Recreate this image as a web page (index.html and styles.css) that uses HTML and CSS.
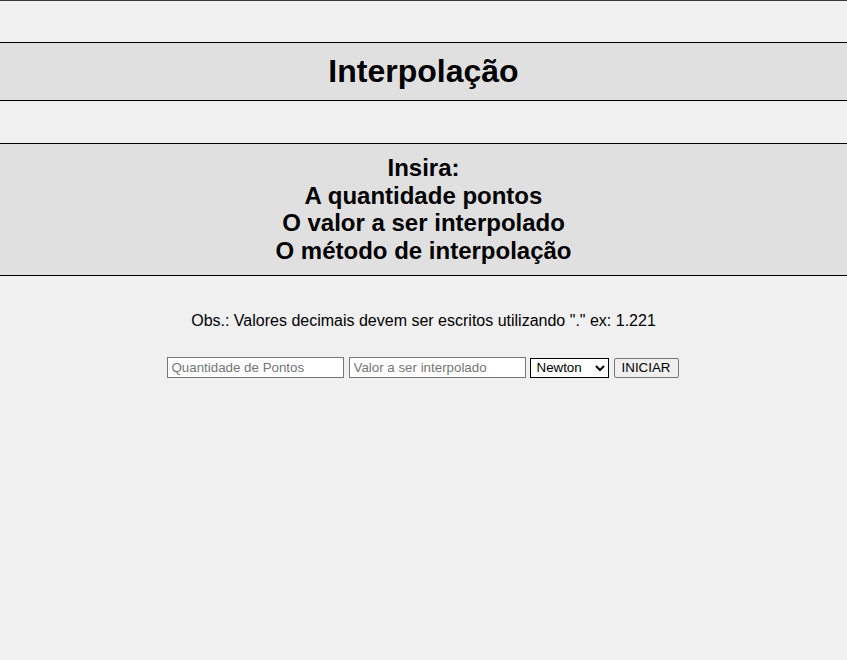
FILE: index.html
```html
<!DOCTYPE html>
<html lang="pt">
<head>
<meta charset="utf-8">
<title>Interpolação</title>
<link rel="stylesheet" href="styles.css">
</head>
<body>
<div class="top-gap"></div>
<div class="band title-band">
  <h1 class="title">Interpolação</h1>
</div>
<div class="mid-gap"></div>
<div class="band info-band">
  <h2 class="info">Insira:<br>A quantidade pontos<br>O valor a ser interpolado<br>O método de interpolação</h2>
</div>
<p class="obs">Obs.: Valores decimais devem ser escritos utilizando "." ex: 1.221</p>
<div class="controls">
  <input class="field" type="text" placeholder="Quantidade de Pontos">
  <input class="field" type="text" placeholder="Valor a ser interpolado">
  <select class="method">
    <option>Newton</option>
    <option>Lagrange</option>
  </select>
  <button class="start" type="button">INICIAR</button>
</div>
</body>
</html>
```
FILE: styles.css
```css
html, body {
  margin: 0;
  padding: 0;
  background: #f0f0f0;
  font-family: "Liberation Sans", Arial, sans-serif;
  color: #000;
}
.top-gap {
  height: 41px;
  border-top: 1px solid #3a3a3a;
}
.mid-gap {
  height: 42px;
}
.band {
  background: #e0e0e0;
  border-top: 1px solid #000;
  border-bottom: 1px solid #000;
  text-align: center;
}
.title-band {
  padding: 10px 0;
  height: 37px;
}
.title {
  margin: 0;
  font-size: 32px;
  line-height: 37px;
  font-weight: bold;
}
.info-band {
  padding: 10px 0;
  height: 111px;
}
.info {
  margin: 0;
  font-size: 24px;
  line-height: 27.7px;
  font-weight: bold;
}
.obs {
  margin: 36px 0 0;
  text-align: center;
  font-size: 16px;
  line-height: 18px;
}
.controls {
  display: flex;
  justify-content: center;
  align-items: center;
  gap: 5px;
  margin-top: 27px;
  padding-right: 2px;
}
.field {
  box-sizing: border-box;
  width: 177px;
  height: 21px;
  margin: 0;
  padding: 1px 4px;
  border: 1px solid #767676;
  border-radius: 0;
  background: #fff;
  font-family: "Liberation Sans", Arial, sans-serif;
  font-size: 13.33px;
}
.field::placeholder {
  color: #757575;
}
.method {
  box-sizing: border-box;
  width: 79px;
  height: 20px;
  margin: 0 0 0 -1px;
  padding: 0 0 0 2px;
  border: 1px solid #000;
  border-radius: 0;
  background: #fff;
  font-family: "Liberation Sans", Arial, sans-serif;
  font-size: 13.33px;
  color: #000;
}
.start {
  box-sizing: border-box;
  width: 65px;
  height: 20px;
  margin: 0;
  padding: 1px 0;
  border: 1px solid #767676;
  border-radius: 2px;
  background: #efefef;
  font-family: "Liberation Sans", Arial, sans-serif;
  font-size: 13.33px;
  color: #000;
  text-align: center;
}
```
